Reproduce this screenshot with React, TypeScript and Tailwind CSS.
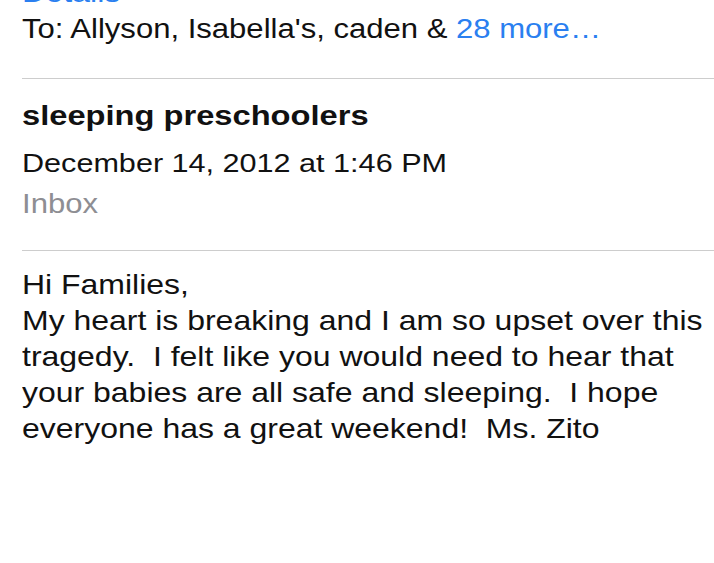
import React from "react";

const stretch = "inline-block origin-left scale-x-[1.15] whitespace-nowrap";

export default function App() {
  const body = [
    "Hi Families,",
    "My heart is breaking and I am so upset over this",
    "tragedy.  I felt like you would need to hear that",
    "your babies are all safe and sleeping.  I hope",
    "everyone has a great weekend!  Ms. Zito",
  ];

  return (
    <div className="w-[714px] h-[563px] bg-white overflow-hidden text-[#111] font-['Liberation_Sans',Arial,sans-serif]">
      {/* previous row, scrolled mostly out of view */}
      <div className="h-[3px] overflow-hidden flex items-end pl-[22px]">
        <span className={`${stretch} text-[28px] leading-[20px] text-[#2a7ff0]`}>Details</span>
      </div>

      <div className="mt-[10px] pl-[22px] text-[27px] leading-[32px]">
        <span className={stretch}>
          To: Allyson, Isabella's, caden &amp; <span className="text-[#2a7ff0]">28 more…</span>
        </span>
      </div>

      <div className="mt-[33px] ml-[22px] h-px bg-[#cdcdcd]" />

      <div className="mt-[19px] pl-[22px] flex flex-col">
        <div className="text-[28.4px] leading-[34px] font-bold">
          <span className={stretch}>sleeping preschoolers</span>
        </div>
        <div className="mt-[14px] text-[26.6px] leading-[34px]">
          <span className={stretch}>December 14, 2012 at 1:46 PM</span>
        </div>
        <div className="mt-[7px] text-[27px] leading-[34px] text-[#8e8e93]">
          <span className={stretch}>Inbox</span>
        </div>
      </div>

      <div className="mt-[29px] ml-[22px] h-px bg-[#cdcdcd]" />

      <div className="mt-[16px] pl-[22px] text-[27.8px] leading-[36px]">
        {body.map((line) => (
          <div key={line}>
            <span className={`${stretch} whitespace-pre`}>{line}</span>
          </div>
        ))}
      </div>
    </div>
  );
}
